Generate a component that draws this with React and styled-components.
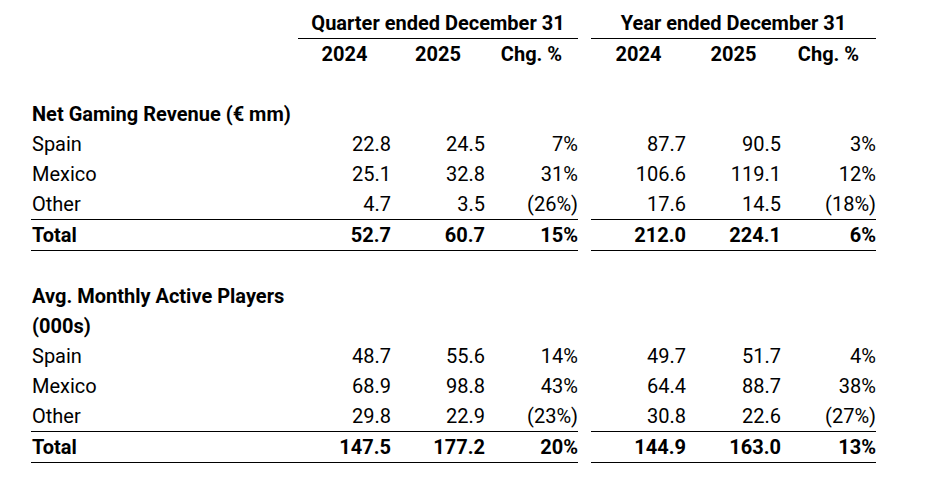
import React from "react";
import styled, { createGlobalStyle } from "styled-components";

const GlobalStyle = createGlobalStyle`
  html, body {
    margin: 0;
    padding: 0;
    background: #ffffff;
  }
  body {
    font-family: Roboto, "Noto Sans", "Liberation Sans", sans-serif;
    color: #000;
  }
`;

const Page = styled.div`
  padding: 8px 0 0 31px;
`;

const Table = styled.div`
  display: grid;
  grid-template-columns: 267px 93px 94px 93px 13px 95px 95px 95px;
  width: 845px;
  font-size: 20px;
  line-height: 30px;
`;

const Row = styled.div`
  display: contents;
`;

const Cell = styled.div`
  min-height: 30px;
  white-space: nowrap;
  text-align: ${(p) => (p.$align === "center" ? "center" : p.$align === "left" ? "left" : "right")};
  font-weight: ${(p) => (p.$bold ? 700 : 400)};
  border-top: ${(p) => (p.$ruleTop ? "1px solid #000" : "0")};
  border-bottom: ${(p) => (p.$ruleBottom ? "1px solid #000" : "0")};
  ${(p) => (p.$span ? `grid-column: span ${p.$span};` : "")}
`;

const Label = styled(Cell)`
  white-space: normal;
  text-align: left;
  padding-left: 1px;
`;

const Spacer = styled.div``;

const Blank = styled.div`
  grid-column: 1 / -1;
  height: 30px;
`;

const sections = [
  {
    title: "Net Gaming Revenue (€ mm)",
    rows: [
      ["Spain", "22.8", "24.5", "7%", "87.7", "90.5", "3%"],
      ["Mexico", "25.1", "32.8", "31%", "106.6", "119.1", "12%"],
      ["Other", "4.7", "3.5", "(26%)", "17.6", "14.5", "(18%)"],
    ],
    total: ["Total", "52.7", "60.7", "15%", "212.0", "224.1", "6%"],
  },
  {
    title: "Avg. Monthly Active Players (000s)",
    rows: [
      ["Spain", "48.7", "55.6", "14%", "49.7", "51.7", "4%"],
      ["Mexico", "68.9", "98.8", "43%", "64.4", "88.7", "38%"],
      ["Other", "29.8", "22.9", "(23%)", "30.8", "22.6", "(27%)"],
    ],
    total: ["Total", "147.5", "177.2", "20%", "144.9", "163.0", "13%"],
  },
];

function DataRow({ values, total }) {
  const [label, ...nums] = values;
  return (
    <Row>
      <Label $bold={total} $ruleTop={total} $ruleBottom={total}>
        {label}
      </Label>
      {nums.slice(0, 3).map((v, i) => (
        <Cell key={"q" + i} $bold={total} $ruleTop={total} $ruleBottom={total}>
          {v}
        </Cell>
      ))}
      <Spacer />
      {nums.slice(3).map((v, i) => (
        <Cell key={"y" + i} $bold={total} $ruleTop={total} $ruleBottom={total}>
          {v}
        </Cell>
      ))}
    </Row>
  );
}

export default function App() {
  const years = ["2024", "2025", "Chg. %"];
  return (
    <Page>
      <GlobalStyle />
      <Table>
        <Row>
          <Spacer />
          <Cell $span={3} $align="center" $bold $ruleBottom>
            Quarter ended December 31
          </Cell>
          <Spacer />
          <Cell $span={3} $align="center" $bold $ruleBottom>
            Year ended December 31
          </Cell>
        </Row>
        <Row>
          <Spacer />
          {years.map((y) => (
            <Cell key={"qh" + y} $align="center" $bold>
              {y}
            </Cell>
          ))}
          <Spacer />
          {years.map((y) => (
            <Cell key={"yh" + y} $align="center" $bold>
              {y}
            </Cell>
          ))}
        </Row>
        {sections.map((s) => (
          <React.Fragment key={s.title}>
            <Blank />
            <Row>
              <Label $bold>{s.title}</Label>
              <Cell $span={7} />
            </Row>
            {s.rows.map((r) => (
              <DataRow key={s.title + r[0]} values={r} />
            ))}
            <DataRow values={s.total} total />
          </React.Fragment>
        ))}
      </Table>
    </Page>
  );
}
